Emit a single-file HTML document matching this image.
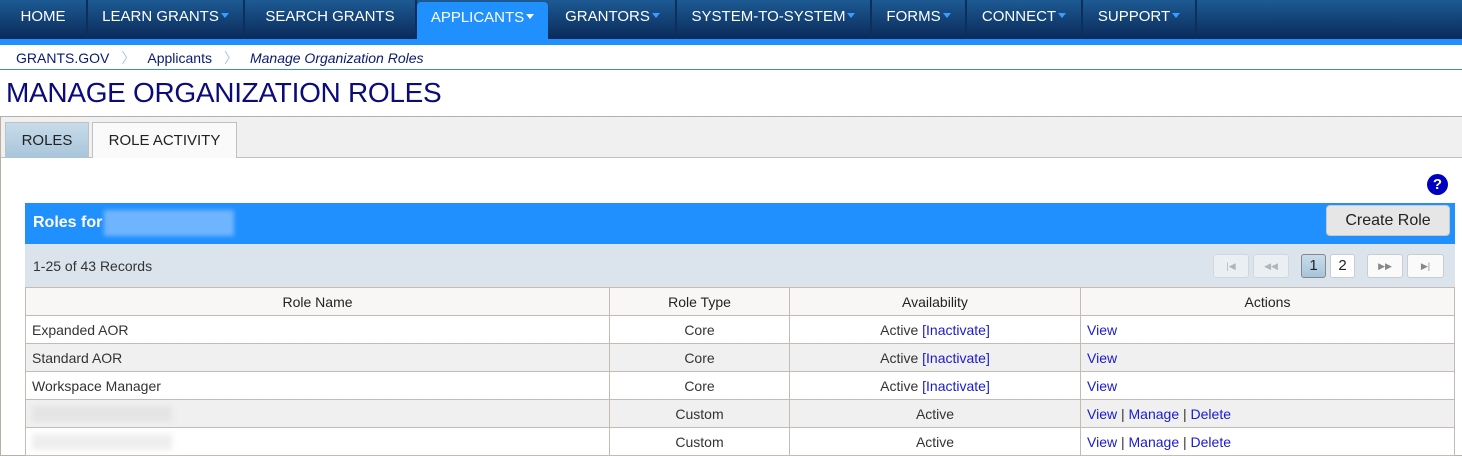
<!DOCTYPE html>
<html><head><style>
*{box-sizing:border-box;margin:0;padding:0}
body{width:1462px;height:456px;overflow:hidden;font-family:"Liberation Sans",Arial,sans-serif;background:#fff;position:relative}
.nav{position:absolute;left:0;top:0;width:1462px;height:39px;background:linear-gradient(#1d5a94,#0a2a5a)}
.nav div{position:absolute;top:0;height:39px;color:#fff;font-size:15px;line-height:34px;text-align:center;border-right:2px solid #0d2f5c}
.nav div.a{background:#2090ff;border-radius:4px 4px 0 0;top:2px;height:37px;line-height:31px}
.car{display:inline-block;width:0;height:0;border-left:4px solid transparent;border-right:4px solid transparent;border-top:5px solid #3a9cff;vertical-align:3px;margin-left:2px}
.a .car{border-top-color:#fff}
.strip{position:absolute;top:39px;left:0;width:1462px;height:6px;background:#2090ff}
.bc{position:absolute;top:49px;left:16px;font-size:14px;line-height:18px;color:#0a1a70}
.bc span{color:#9cc8f0;margin:0 12px;font-size:14px}
.bcl{position:absolute;top:69px;left:0;width:1462px;height:1px;background:#3a8ae0}
h1{position:absolute;top:77px;left:6px;font-weight:normal;font-size:28px;color:#0b0b7a;letter-spacing:-0.3px}
.panel{position:absolute;top:116px;left:0;width:1462px;height:340px;border:1px solid #b8b0a8;border-right:none}
.tabbar{position:absolute;top:0;left:0;width:1462px;height:41px;background:#f0f0f0;border-bottom:1px solid #c0c0c0}
.tab{position:absolute;top:5px;height:36px;font-size:15px;line-height:36px;text-align:center;border:1px solid #c0c0c0;border-bottom:none;color:#222}
.help{position:absolute;top:174px;left:1427px;width:21px;height:21px;border-radius:50%;background:#0000c0;color:#fff;font-weight:bold;font-size:15px;text-align:center;line-height:21px}
.hdr{position:absolute;top:203px;left:25px;width:1430px;height:41px;background:#2090ff}
.hdr b{position:absolute;left:8px;top:11px;color:#fff;font-size:16px}
.blur{position:absolute;left:79px;top:7px;width:130px;height:26px;background:#6fb4ff;filter:blur(2px)}
.cr{position:absolute;right:5px;top:2px;width:124px;height:31px;background:#e6e6e6;border:1px solid #c8c8c8;border-radius:4px;font-size:16px;line-height:29px;text-align:center;color:#222}
.gb{position:absolute;top:244px;left:25px;width:1430px;height:43px;background:#dbe4ec}
.gb span{position:absolute;left:8px;top:14px;font-size:14px;color:#333}
.pb{position:absolute;top:10px;height:24px;border:1px solid #ccc;border-radius:3px;background:#fafafa;font-size:15px;text-align:center;line-height:22px;color:#222}
.pb.d{opacity:.5;font-size:9px;color:#888}
table{position:absolute;top:287px;left:25px;width:1430px;border-collapse:collapse;font-size:14px;color:#333}
td,th{border:1px solid #c4bcb4;height:28px;padding:0 6px;font-weight:normal}
th{background:#f8f7f5;color:#222}
tr.g td{background:#f0f0f0}
.c{text-align:center}
a{color:#1a1ad0;text-decoration:none}
.bl{display:inline-block;width:140px;height:16px;background:#e4e4e4;filter:blur(3px);vertical-align:middle}
</style></head><body>
<div class="nav">
<div style="left:0;width:88px">HOME</div>
<div style="left:88px;width:157px">LEARN GRANTS<span class="car"></span></div>
<div style="left:245px;width:172px">SEARCH GRANTS</div>
<div class="a" style="left:417px;width:131px;border:none">APPLICANTS<span class="car"></span></div>
<div style="left:550px;width:127px">GRANTORS<span class="car"></span></div>
<div style="left:677px;width:195px">SYSTEM-TO-SYSTEM<span class="car"></span></div>
<div style="left:872px;width:95px">FORMS<span class="car"></span></div>
<div style="left:967px;width:116px">CONNECT<span class="car"></span></div>
<div style="left:1083px;width:114px">SUPPORT<span class="car"></span></div>
</div>
<div class="strip"></div>
<div class="bc">GRANTS.GOV<span>〉</span>Applicants<span>〉</span><i>Manage Organization Roles</i></div>
<div class="bcl"></div>
<h1>MANAGE ORGANIZATION ROLES</h1>
<div class="panel"><div class="tabbar">
<div class="tab" style="left:4px;width:84px;background:linear-gradient(#c8dcea,#a8c4da)">ROLES</div>
<div class="tab" style="left:91px;width:145px;background:#fafafa">ROLE ACTIVITY</div>
</div></div>
<div class="help">?</div>
<div class="hdr"><b>Roles for</b><div class="blur"></div><div class="cr">Create Role</div></div>
<div class="gb"><span>1-25 of 43 Records</span>
<div class="pb d" style="left:1188px;width:36px">|◀</div>
<div class="pb d" style="left:1228px;width:36px">◀◀</div>
<div class="pb" style="left:1276px;width:25px;background:linear-gradient(#c8dcea,#a8c4da);border-color:#888">1</div>
<div class="pb" style="left:1305px;width:25px;background:#fff">2</div>
<div class="pb" style="left:1342px;width:36px;font-size:9px;color:#888">▶▶</div>
<div class="pb" style="left:1382px;width:37px;font-size:9px;color:#888">▶|</div>
</div>
<table>
<tr><th style="width:584px">Role Name</th><th style="width:180px">Role Type</th><th style="width:291px">Availability</th><th>Actions</th></tr>
<tr><td>Expanded AOR</td><td class="c">Core</td><td class="c">Active <a>[Inactivate]</a></td><td><a>View</a></td></tr>
<tr class="g"><td>Standard AOR</td><td class="c">Core</td><td class="c">Active <a>[Inactivate]</a></td><td><a>View</a></td></tr>
<tr><td>Workspace Manager</td><td class="c">Core</td><td class="c">Active <a>[Inactivate]</a></td><td><a>View</a></td></tr>
<tr class="g"><td><span class="bl"></span></td><td class="c">Custom</td><td class="c">Active</td><td><a>View</a> | <a>Manage</a> | <a>Delete</a></td></tr>
<tr><td><span class="bl" style="background:#eee"></span></td><td class="c">Custom</td><td class="c">Active</td><td><a>View</a> | <a>Manage</a> | <a>Delete</a></td></tr>
</table>
</body></html>
